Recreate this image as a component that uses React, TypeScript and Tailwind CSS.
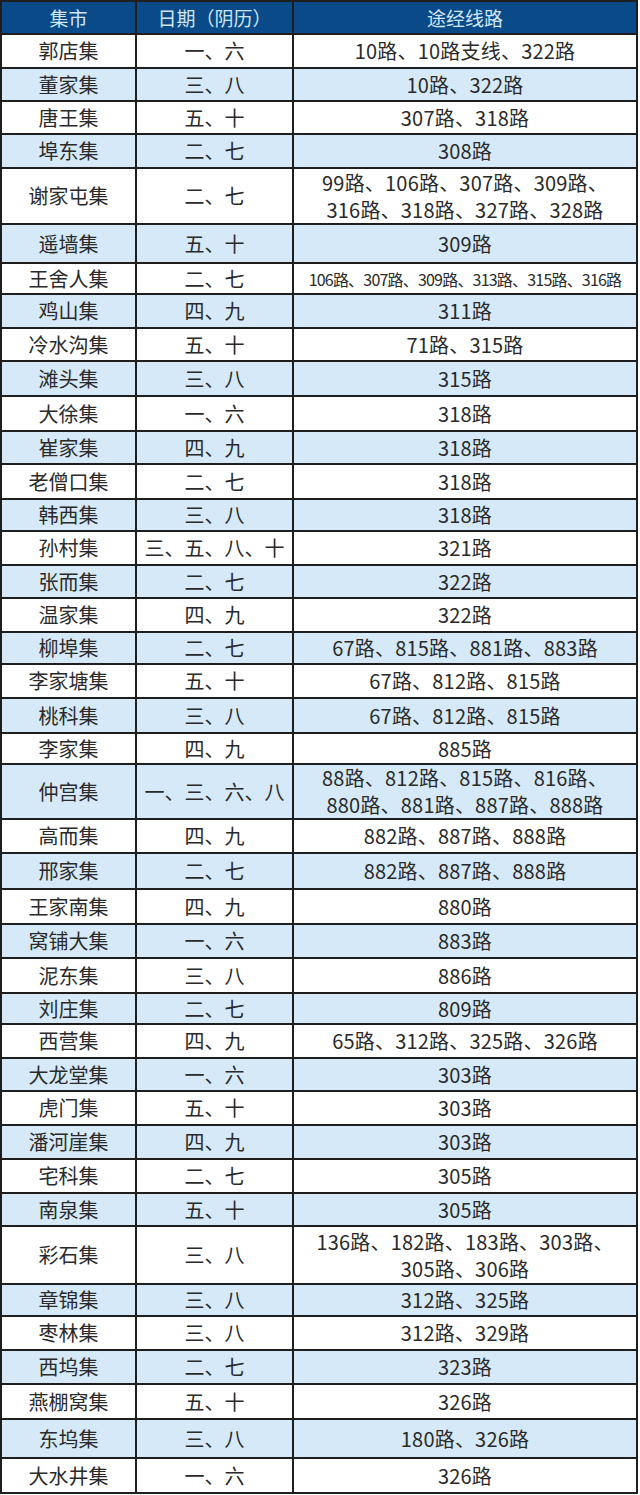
const rows: Array<[string, string, string[], number, boolean?]> = [
  ["郭店集", "一、六", ["10路、10路支线、322路"], 34],
  ["董家集", "三、八", ["10路、322路"], 33],
  ["唐王集", "五、十", ["307路、318路"], 33],
  ["埠东集", "二、七", ["308路"], 34],
  ["谢家屯集", "二、七", ["99路、106路、307路、309路、", "316路、318路、327路、328路"], 56],
  ["遥墙集", "五、十", ["309路"], 39],
  ["王舍人集", "二、七", ["106路、307路、309路、313路、315路、316路"], 31, true],
  ["鸡山集", "四、九", ["311路"], 34],
  ["冷水沟集", "五、十", ["71路、315路"], 33],
  ["滩头集", "三、八", ["315路"], 35],
  ["大徐集", "一、六", ["318路"], 35],
  ["崔家集", "四、九", ["318路"], 33],
  ["老僧口集", "二、七", ["318路"], 35],
  ["韩西集", "三、八", ["318路"], 32],
  ["孙村集", "三、五、八、十", ["321路"], 34],
  ["张而集", "二、七", ["322路"], 33],
  ["温家集", "四、九", ["322路"], 34],
  ["柳埠集", "二、七", ["67路、815路、881路、883路"], 32],
  ["李家塘集", "五、十", ["67路、812路、815路"], 34],
  ["桃科集", "三、八", ["67路、812路、815路"], 35],
  ["李家集", "四、九", ["885路"], 31],
  ["仲宫集", "一、三、六、八", ["88路、812路、815路、816路、", "880路、881路、887路、888路"], 55],
  ["高而集", "四、九", ["882路、887路、888路"], 34],
  ["邢家集", "二、七", ["882路、887路、888路"], 36],
  ["王家南集", "四、九", ["880路"], 35],
  ["窝铺大集", "一、六", ["883路"], 34],
  ["泥东集", "三、八", ["886路"], 35],
  ["刘庄集", "二、七", ["809路"], 31],
  ["西营集", "四、九", ["65路、312路、325路、326路"], 34],
  ["大龙堂集", "一、六", ["303路"], 33],
  ["虎门集", "五、十", ["303路"], 34],
  ["潘河崖集", "四、九", ["303路"], 34],
  ["宅科集", "二、七", ["305路"], 34],
  ["南泉集", "五、十", ["305路"], 33],
  ["彩石集", "三、八", ["136路、182路、183路、303路、", "305路、306路"], 58],
  ["章锦集", "三、八", ["312路、325路"], 32],
  ["枣林集", "三、八", ["312路、329路"], 34],
  ["西坞集", "二、七", ["323路"], 34],
  ["燕棚窝集", "五、十", ["326路"], 35],
  ["东坞集", "三、八", ["180路、326路"], 39],
  ["大水井集", "一、六", ["326路"], 35],
]

export default function App() {
  return (
    <div className="w-[640px] bg-white font-['Noto_Sans_CJK_SC','Liberation_Sans',sans-serif] text-[#2a2a2a]">
      <table className="w-[638px] table-fixed border-collapse border-2 border-[#1e1e1e]">
        <colgroup>
          <col className="w-[135px]" />
          <col className="w-[157px]" />
          <col />
        </colgroup>
        <thead>
          <tr className="h-[33px] bg-[#0b4a88] text-[#cfe6f7]">
            <th className="border-2 border-[#1e1e1e] p-0 text-[19px] font-normal leading-none">集市</th>
            <th className="border-2 border-[#1e1e1e] p-0 text-[19px] font-normal leading-none">日期（阴历）</th>
            <th className="border-2 border-[#1e1e1e] p-0 text-[19px] font-normal leading-none">途经线路</th>
          </tr>
        </thead>
        <tbody>
          {rows.map(([name, days, routes, h, small], i) => (
            <tr
              key={name}
              style={{ height: h }}
              className={i % 2 === 1 ? "bg-[#d5e9f8]" : "bg-white"}
            >
              <td className="border-2 border-[#1e1e1e] p-0 text-center text-[20px] leading-none">{name}</td>
              <td className="border-2 border-[#1e1e1e] p-0 text-center text-[20px] leading-none whitespace-nowrap">{days}</td>
              <td
                className={
                  small
                    ? "border-2 border-[#1e1e1e] p-0 text-center text-[16px] leading-none whitespace-nowrap tracking-tighter"
                    : "border-2 border-[#1e1e1e] p-0 text-center text-[20px] leading-[26px] whitespace-nowrap tracking-[0.01em]"
                }
              >
                {routes.length > 1 ? (
                  <div className="flex flex-col gap-px">
                    {routes.map((r) => (
                      <div key={r}>{r}</div>
                    ))}
                  </div>
                ) : (
                  routes[0]
                )}
              </td>
            </tr>
          ))}
        </tbody>
      </table>
    </div>
  )
}
